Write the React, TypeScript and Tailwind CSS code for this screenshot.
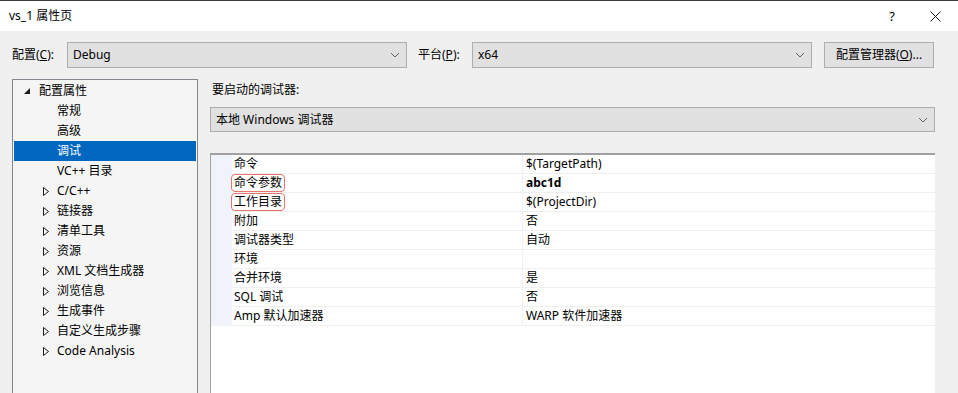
import React from "react";

const FONT = { fontFamily: '"Noto Sans", "Noto Sans CJK SC", sans-serif' };

function Chevron() {
  return (
    <svg width="10" height="6" viewBox="0 0 10 6" className="shrink-0">
      <path d="M1 1 L5 5 L9 1" fill="none" stroke="#606060" strokeWidth="1" />
    </svg>
  );
}

function Combo({ text, className }: { text: string; className: string }) {
  return (
    <div
      className={`flex items-center justify-between border border-[#adadad] bg-[#e1e1e1] pl-[5px] pr-[6px] ${className}`}
    >
      <span className="text-[12px] leading-none text-black">{text}</span>
      <Chevron />
    </div>
  );
}

function Expanded() {
  return (
    <svg width="6" height="6" viewBox="0 0 6 6">
      <path d="M6 0 L6 6 L0 6 Z" fill="#1f1f1f" />
    </svg>
  );
}

function Collapsed() {
  return (
    <svg width="6" height="9" viewBox="0 0 6 9">
      <path d="M0.5 0.5 L5.5 4.5 L0.5 8.5 Z" fill="none" stroke="#1f1f1f" strokeWidth="1" />
    </svg>
  );
}

const treeItems: { label: string; level: number; kind: "open" | "closed" | "leaf"; selected?: boolean }[] = [
  { label: "配置属性", level: 0, kind: "open" },
  { label: "常规", level: 1, kind: "leaf" },
  { label: "高级", level: 1, kind: "leaf" },
  { label: "调试", level: 1, kind: "leaf", selected: true },
  { label: "VC++ 目录", level: 1, kind: "leaf" },
  { label: "C/C++", level: 1, kind: "closed" },
  { label: "链接器", level: 1, kind: "closed" },
  { label: "清单工具", level: 1, kind: "closed" },
  { label: "资源", level: 1, kind: "closed" },
  { label: "XML 文档生成器", level: 1, kind: "closed" },
  { label: "浏览信息", level: 1, kind: "closed" },
  { label: "生成事件", level: 1, kind: "closed" },
  { label: "自定义生成步骤", level: 1, kind: "closed" },
  { label: "Code Analysis", level: 1, kind: "closed" },
];

const props: { name: string; value: string; boxed?: boolean; bold?: boolean }[] = [
  { name: "命令", value: "$(TargetPath)" },
  { name: "命令参数", value: "abc1d", boxed: true, bold: true },
  { name: "工作目录", value: "$(ProjectDir)", boxed: true },
  { name: "附加", value: "否" },
  { name: "调试器类型", value: "自动" },
  { name: "环境", value: "" },
  { name: "合并环境", value: "是" },
  { name: "SQL 调试", value: "否" },
  { name: "Amp 默认加速器", value: "WARP 软件加速器" },
];

export default function App() {
  return (
    <div className="w-[958px] h-[393px] overflow-hidden bg-[#f0f0f0] text-[12px] text-black" style={FONT}>
      {/* title bar */}
      <div className="h-[31px] bg-white border-t border-[#3c3c3c] flex items-center pl-[9px]">
        <span className="text-[12px] leading-none">vs_1 属性页</span>
        <div className="ml-auto flex items-center">
          <span className="w-[40px] text-center text-[13px] leading-none">?</span>
          <div className="w-[46px] flex justify-center">
            <svg width="11" height="11" viewBox="0 0 11 11">
              <path d="M0.5 0.5 L10.5 10.5 M10.5 0.5 L0.5 10.5" stroke="#1a1a1a" strokeWidth="1" />
            </svg>
          </div>
        </div>
      </div>

      {/* config row */}
      <div className="flex items-center pl-[12px] mt-[11px] h-[26px]">
        <span className="w-[55px] leading-none">
          配置(<span className="underline">C</span>):
        </span>
        <Combo text="Debug" className="w-[340px] h-[26px]" />
        <span className="w-[54px] ml-[11px] leading-none">
          平台(<span className="underline">P</span>):
        </span>
        <Combo text="x64" className="w-[340px] h-[26px]" />
        <button className="ml-[12px] w-[110px] h-[26px] border border-[#adadad] bg-[#e1e1e1] text-[12px] leading-none">
          配置管理器(<span className="underline">O</span>)...
        </button>
      </div>

      {/* main */}
      <div className="flex mt-[11px] pl-[12px]">
        {/* tree */}
        <div className="w-[186px] h-[320px] border border-[#828790] bg-[#f5f5f5] p-px shrink-0">
          {treeItems.map((it) => (
            <div
              key={it.label}
              className={`h-[20px] flex items-center ${it.selected ? "bg-[#0067c0] text-white" : ""}`}
            >
              <div className={`flex items-center justify-center w-[8px] ${it.level === 0 ? "ml-[9px]" : "ml-[28px]"}`}>
                {it.kind === "open" && <Expanded />}
                {it.kind === "closed" && <Collapsed />}
              </div>
              <span className={`leading-none ${it.level === 0 ? "ml-[8px]" : "ml-[7px]"}`}>{it.label}</span>
            </div>
          ))}
        </div>

        {/* right pane */}
        <div className="ml-[12px] w-[725px] flex flex-col">
          <div className="h-[19px] flex items-center pl-[2px] mt-[1px] leading-none">要启动的调试器:</div>
          <Combo text="本地 Windows 调试器" className="mt-[8px] h-[25px] w-full" />
          <div className="mt-[21px] bg-white border-t-2 border-l border-[#a0a0a0] h-[260px]">
            {props.map((p) => (
              <div key={p.name} className="h-[19px] flex">
                <div className="w-[21px] bg-[#f0f4fa] shrink-0" />
                <div className="flex-1 flex border-b border-[#f0f0f0]">
                  <div className="w-[291px] border-r border-[#f0f0f0] flex items-center">
                    <span
                      className={`leading-none ${
                        p.boxed ? "border border-[#e8746e] rounded-[4px] px-[2px] py-[2px] -ml-[1px]" : "pl-[2px]"
                      }`}
                    >
                      {p.name}
                    </span>
                  </div>
                  <div className="flex-1 flex items-center pl-[3px]">
                    <span className={`leading-none ${p.bold ? "font-bold" : ""}`}>{p.value}</span>
                  </div>
                </div>
              </div>
            ))}
          </div>
        </div>
      </div>
    </div>
  );
}
